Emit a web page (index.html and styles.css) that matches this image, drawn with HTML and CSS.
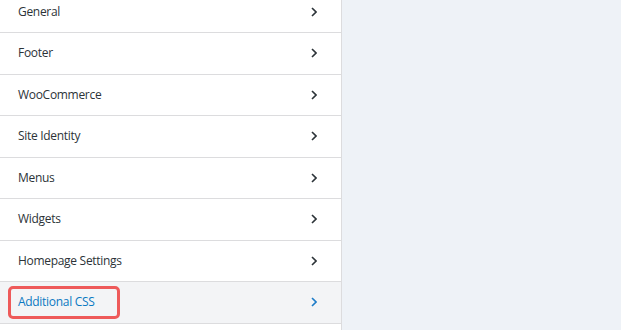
FILE: index.html
```html
<!DOCTYPE html>
<html>
<head>
<meta charset="utf-8">
<link rel="stylesheet" href="styles.css">
</head>
<body>
<div class="layout">
  <aside class="sidebar">
    <ul class="sections">
      <li class="row"><span class="label">General</span><svg class="chev" viewBox="0 0 6 10"><polyline points="1,1 5,5 1,9"/></svg></li>
      <li class="row"><span class="label">Footer</span><svg class="chev" viewBox="0 0 6 10"><polyline points="1,1 5,5 1,9"/></svg></li>
      <li class="row"><span class="label">WooCommerce</span><svg class="chev" viewBox="0 0 6 10"><polyline points="1,1 5,5 1,9"/></svg></li>
      <li class="row"><span class="label">Site Identity</span><svg class="chev" viewBox="0 0 6 10"><polyline points="1,1 5,5 1,9"/></svg></li>
      <li class="row"><span class="label">Menus</span><svg class="chev" viewBox="0 0 6 10"><polyline points="1,1 5,5 1,9"/></svg></li>
      <li class="row"><span class="label">Widgets</span><svg class="chev" viewBox="0 0 6 10"><polyline points="1,1 5,5 1,9"/></svg></li>
      <li class="row"><span class="label">Homepage Settings</span><svg class="chev" viewBox="0 0 6 10"><polyline points="1,1 5,5 1,9"/></svg></li>
      <li class="row active"><span class="label">Additional CSS</span><svg class="chev" viewBox="0 0 6 10"><polyline points="1,1 5,5 1,9"/></svg><span class="highlight"></span></li>
      <li class="row"><span class="label"></span></li>
    </ul>
  </aside>
  <main class="preview"></main>
</div>
</body>
</html>
```
FILE: styles.css
```css
html, body {
  margin: 0;
  padding: 0;
  height: 100%;
  overflow: hidden;
}
body {
  font-family: "Open Sans", "Noto Sans", sans-serif;
  font-size: 12px;
  letter-spacing: -0.3px;
  color: #2c3338;
}
.layout {
  display: flex;
  height: 330px;
}
.sidebar {
  width: 341px;
  flex: none;
  background: #ffffff;
  border-right: 1px solid #dcdcde;
  overflow: hidden;
}
.preview {
  flex: 1;
  background: #eef2f7;
}
.sections {
  list-style: none;
  margin: -8.5px 0 0 0;
  padding: 0;
}
.row {
  position: relative;
  display: flex;
  align-items: center;
  justify-content: space-between;
  height: 40.5px;
  padding: 0 24px 0 18px;
  border-bottom: 1px solid #dcdcde;
}
.label {
  line-height: 1;
  font-weight: 500;
}
.chev {
  width: 6px;
  height: 10px;
  fill: none;
  stroke: #2c3338;
  stroke-width: 1.6;
}
.active {
  background: #f3f4f6;
}
.active .label {
  color: #0b79c2;
}
.active .chev {
  stroke: #1e7cc8;
}
.highlight {
  position: absolute;
  left: 8px;
  top: 4px;
  width: 106px;
  height: 27px;
  border: 3px solid #ee5a5a;
  border-radius: 5px;
}
```
